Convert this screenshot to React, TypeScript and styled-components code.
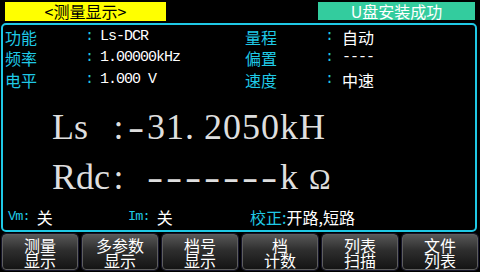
import React from 'react';
import styled, { createGlobalStyle } from 'styled-components';

const GlobalStyle = createGlobalStyle`
  html, body {
    margin: 0;
    padding: 0;
    background: #000;
  }
`;

const CJK = `"Noto Sans CJK SC", "Noto Sans", sans-serif`;
const MONO = `"Liberation Mono", "Noto Sans CJK SC", monospace`;
const SERIF = `"Liberation Serif", serif`;
const CYAN = '#1fc9e6';

const Screen = styled.div`
  width: 480px;
  height: 272px;
  overflow: hidden;
  background: #000;
  display: flex;
  flex-direction: column;
  font-family: ${CJK};
`;

const TopBar = styled.header`
  height: 23px;
  box-sizing: border-box;
  padding: 2px 5px 0 5px;
  display: flex;
  justify-content: space-between;
  align-items: flex-start;
`;

const Tab = styled.div<{ $bg: string; $fg: string; $w: number; $h: number }>`
  width: ${(p) => p.$w}px;
  height: ${(p) => p.$h}px;
  background: ${(p) => p.$bg};
  color: ${(p) => p.$fg};
  font-size: 16px;
  line-height: ${(p) => p.$h}px;
  text-align: center;
  white-space: nowrap;
`;

const Panel = styled.section`
  height: 209px;
  box-sizing: border-box;
  margin: 0 3px 0 1px;
  border: 2px solid ${CYAN};
  border-radius: 5px;
  padding: 1px 2px 0 2px;
  display: flex;
  flex-direction: column;
`;

const InfoGrid = styled.div`
  display: grid;
  grid-template-columns: 80px 15px 145px 80px 17px 1fr;
  grid-auto-rows: 21.5px;
  align-items: center;
`;

const Label = styled.div`
  color: ${CYAN};
  font-size: 16px;
  line-height: 20px;
  height: 20px;
  font-family: ${CJK};
  white-space: nowrap;
`;

const Colon = styled.div`
  color: ${CYAN};
  font-family: ${MONO};
  font-size: 15px;
  line-height: 20px;
  height: 20px;
`;

const Value = styled.div<{ $cjk?: boolean }>`
  color: #fff;
  font-family: ${(p) => (p.$cjk ? CJK : MONO)};
  font-size: ${(p) => (p.$cjk ? 16 : 15)}px;
  letter-spacing: ${(p) => (p.$cjk ? 0 : -1)}px;
  line-height: 20px;
  height: 20px;
  white-space: pre;
`;

const Readout = styled.div<{ $top: number }>`
  margin-top: ${(p) => p.$top}px;
  height: 40px;
  display: flex;
  align-items: baseline;
  padding-left: 47px;
  color: #dedede;
  font-family: ${SERIF};
  font-size: 36px;
  line-height: 40px;
  white-space: pre;
`;

const ReadName = styled.span`
  width: 57px;
`;

const ReadColon = styled.span`
  width: 19px;
  text-align: center;
`;

const Cell = styled.span<{ $dash?: boolean }>`
  display: inline-block;
  width: 19px;
  ${(p) => p.$dash && 'transform: scaleX(1.35); transform-origin: 0 50%;'}
`;

const Unit = styled.span`
  margin-left: 10px;
  font-size: 29px;
`;

const StatusRow = styled.div`
  margin-top: 10px;
  height: 20px;
  display: flex;
  align-items: center;
  padding-left: 3px;
`;

const StatusItem = styled.div<{ $w?: number }>`
  width: ${(p) => (p.$w ? `${p.$w}px` : 'auto')};
  display: flex;
  align-items: center;
  white-space: pre;
`;

const SmallKey = styled.span`
  color: ${CYAN};
  font-family: ${MONO};
  font-size: 13.5px;
  letter-spacing: -0.9px;
`;

const StatusText = styled.span<{ $cyan?: boolean }>`
  color: ${(p) => (p.$cyan ? CYAN : '#fff')};
  font-size: 16px;
  font-family: ${CJK};
`;

const ButtonBar = styled.nav`
  margin-top: 2px;
  padding: 0 2px;
  display: grid;
  grid-template-columns: repeat(6, 76px);
  column-gap: 4px;
`;

const SoftKey = styled.button`
  height: 36px;
  margin: 0;
  padding: 2px 0 0;
  box-sizing: border-box;
  border: 1px solid #5e5e5e;
  border-radius: 4px;
  box-shadow: 0 0 0 1px #15152a;
  background: linear-gradient(180deg, #565656 0%, #2e2e2e 45%, #141414 100%);
  color: #fff;
  font-family: ${CJK};
  font-size: 16px;
  line-height: 15px;
  text-align: center;
  white-space: pre;
`;

const info = [
  ['功能', 'Ls-DCR', '量程', '自动'],
  ['频率', '1.00000kHz', '偏置', '----'],
  ['电平', '1.000 V', '速度', '中速'],
];

const keys = ['测量\n显示', '多参数\n显示', '档号\n显示', '档\n计数', '列表\n扫描', '文件\n列表'];

function Cells({ text }: { text: string }) {
  return (
    <>
      {text.split('').map((ch, i) => (
        <Cell key={i} $dash={ch === '-'}>
          {ch}
        </Cell>
      ))}
    </>
  );
}

function App() {
  return (
    <Screen>
      <GlobalStyle />
      <TopBar>
        <Tab $bg="#ffff00" $fg="#000" $w={161} $h={19}>
          &lt;测量显示&gt;
        </Tab>
        <Tab $bg="#33cc9e" $fg="#fff" $w={157} $h={18}>
          U盘安装成功
        </Tab>
      </TopBar>
      <Panel>
        <InfoGrid>
          {info.map(([l1, v1, l2, v2]) => (
            <React.Fragment key={l1}>
              <Label>{l1}</Label>
              <Colon>:</Colon>
              <Value>{v1}</Value>
              <Label>{l2}</Label>
              <Colon>:</Colon>
              <Value $cjk={/[\u4e00-\u9fff]/.test(v2)}>{v2}</Value>
            </React.Fragment>
          ))}
        </InfoGrid>
        <Readout $top={16}>
          <ReadName>Ls</ReadName>
          <ReadColon>:</ReadColon>
          <Cells text="-31.2050kH" />
        </Readout>
        <Readout $top={10}>
          <ReadName>Rdc</ReadName>
          <ReadColon>:</ReadColon>
          <Cells text=" -------k" />
          <Unit>Ω</Unit>
        </Readout>
        <StatusRow>
          <StatusItem $w={120}>
            <SmallKey>Vm: </SmallKey>
            <StatusText>关</StatusText>
          </StatusItem>
          <StatusItem $w={122}>
            <SmallKey>Im: </SmallKey>
            <StatusText>关</StatusText>
          </StatusItem>
          <StatusItem>
            <StatusText $cyan>校正:</StatusText>
            <StatusText>开路,短路</StatusText>
          </StatusItem>
        </StatusRow>
      </Panel>
      <ButtonBar>
        {keys.map((k) => (
          <SoftKey key={k}>{k}</SoftKey>
        ))}
      </ButtonBar>
    </Screen>
  );
}

export default App;
